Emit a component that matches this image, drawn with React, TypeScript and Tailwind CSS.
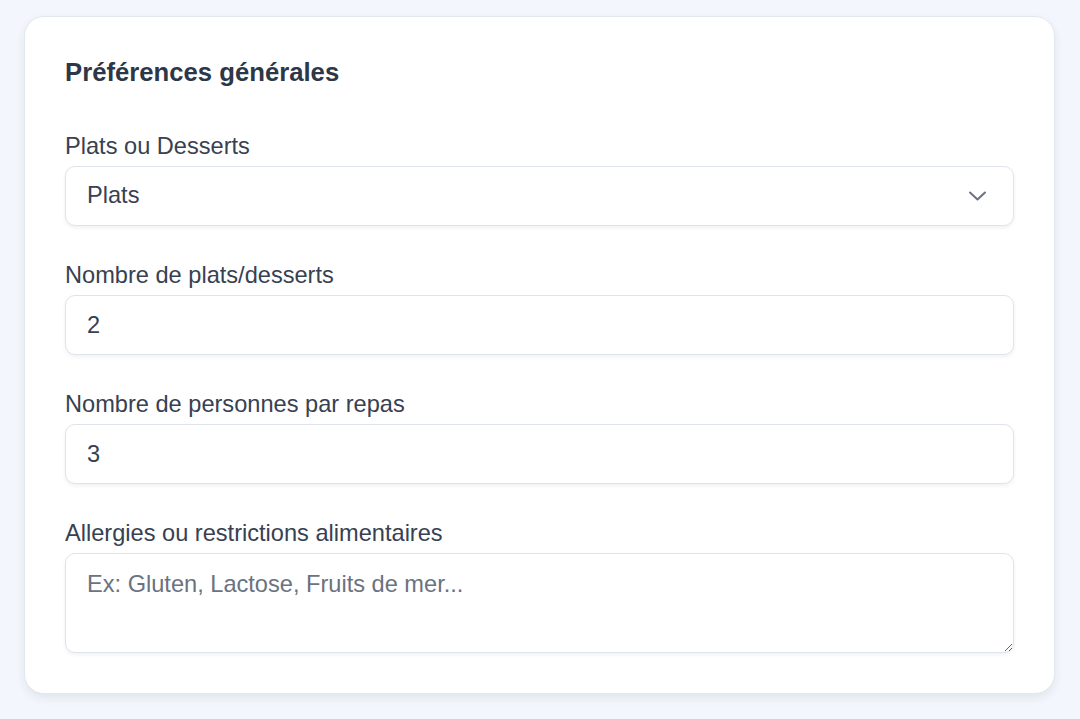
import React, { useState } from 'react';

const font = { fontFamily: '"Liberation Sans", Arial, sans-serif' };

const fieldClass =
  'w-full h-[60px] rounded-[10px] border border-[#dfe4ec] bg-white px-[21px] text-[23.6px] text-[#374151] shadow-[0_2px_4px_rgba(15,23,42,0.06)] outline-none';

const labelClass = 'block text-[23.6px] leading-[28px] mb-[6px] text-[#374151]';

const App: React.FC = () => {
  const [kind, setKind] = useState('Plats');
  const [dishes, setDishes] = useState('2');
  const [people, setPeople] = useState('3');
  const [allergies, setAllergies] = useState('');

  return (
    <div className="min-h-screen bg-[#f3f7fd] pl-[24px] pr-[25px] pt-[16px] pb-[26px]" style={font}>
      <div className="rounded-[20px] border border-[#e3e8ef] bg-white p-10 shadow-[0_4px_10px_rgba(15,23,42,0.08)]">
        <h2 className="text-[25.7px] leading-[30px] font-bold text-[#2d3748] mb-[45px]">
          Préférences générales
        </h2>

        <div className="flex flex-col gap-[35px]">
          <div>
            <label className={labelClass}>Plats ou Desserts</label>
            <div className="relative">
              <select
                value={kind}
                onChange={(e) => setKind(e.target.value)}
                className={fieldClass + ' appearance-none pr-12'}
                style={font}
              >
                <option>Plats</option>
                <option>Desserts</option>
              </select>
              <svg
                className="pointer-events-none absolute right-[27px] top-1/2 -translate-y-1/2"
                width="19"
                height="11"
                viewBox="0 0 19 11"
                fill="none"
                stroke="#6b7280"
                strokeWidth={2}
                strokeLinecap="round"
                strokeLinejoin="round"
              >
                <path d="M2 2l7.5 7 7.5-7" />
              </svg>
            </div>
          </div>

          <div>
            <label className={labelClass}>Nombre de plats/desserts</label>
            <input
              type="text"
              value={dishes}
              onChange={(e) => setDishes(e.target.value)}
              className={fieldClass}
              style={font}
            />
          </div>

          <div>
            <label className={labelClass}>Nombre de personnes par repas</label>
            <input
              type="text"
              value={people}
              onChange={(e) => setPeople(e.target.value)}
              className={fieldClass}
              style={font}
            />
          </div>

          <div>
            <label className={labelClass}>Allergies ou restrictions alimentaires</label>
            <textarea
              value={allergies}
              onChange={(e) => setAllergies(e.target.value)}
              placeholder="Ex: Gluten, Lactose, Fruits de mer..."
              className="block w-full h-[100px] rounded-[10px] border border-[#dfe4ec] bg-white px-[21px] pt-[12px] text-[23.6px] leading-[36px] text-[#374151] placeholder:text-[#6b7280] shadow-[0_2px_4px_rgba(15,23,42,0.06)] outline-none"
              style={font}
            />
          </div>
        </div>
      </div>
    </div>
  );
};

export default App;
